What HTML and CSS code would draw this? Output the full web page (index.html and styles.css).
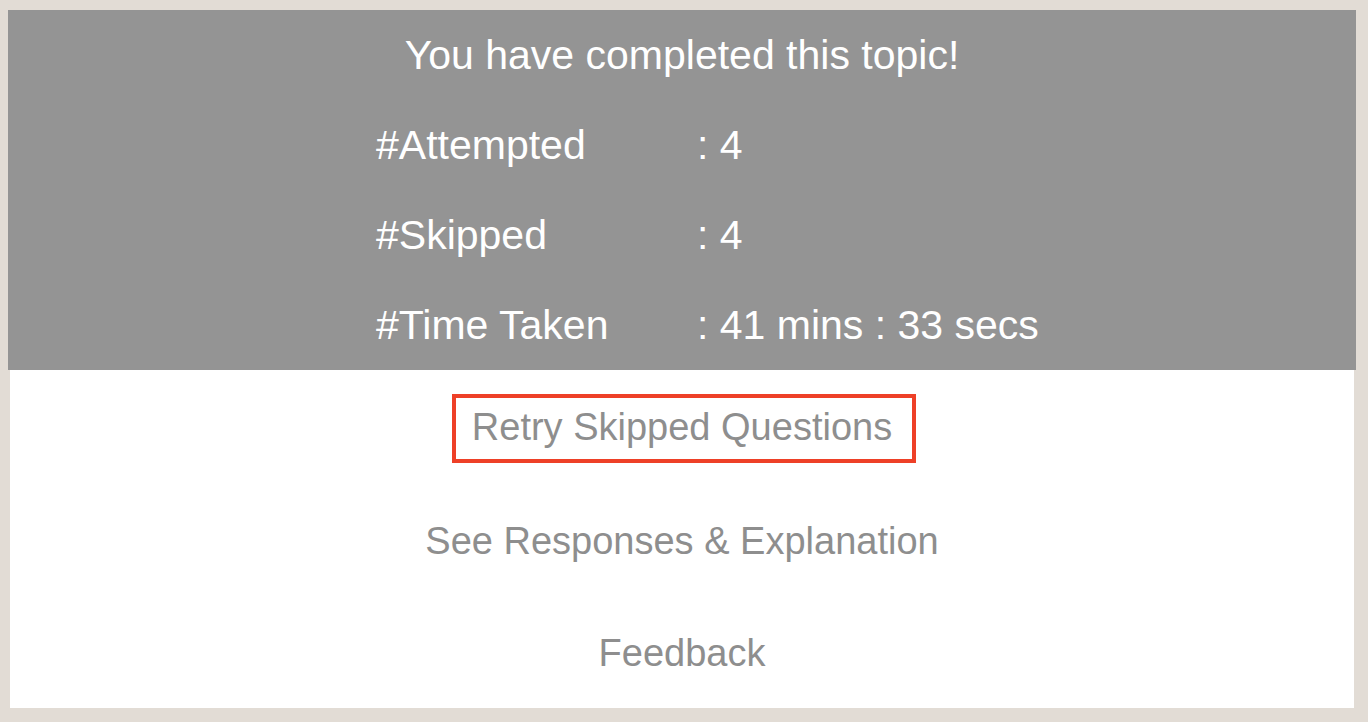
FILE: index.html
```html
<!DOCTYPE html>
<html lang="en">
<head>
<meta charset="utf-8">
<title>Topic completed</title>
<link rel="stylesheet" href="styles.css">
</head>
<body>
<div class="frame">
  <section class="summary">
    <h1 class="summary-title">You have completed this topic!</h1>
    <div class="stats">
      <div class="stat-label">#Attempted</div><div class="stat-value">: 4</div>
      <div class="stat-label">#Skipped</div><div class="stat-value">: 4</div>
      <div class="stat-label">#Time Taken</div><div class="stat-value">: 41 mins : 33 secs</div>
    </div>
  </section>
  <section class="actions">
    <a class="action action-retry" href="#">Retry Skipped Questions</a>
    <a class="action action-responses" href="#">See Responses &amp; Explanation</a>
    <a class="action action-feedback" href="#">Feedback</a>
  </section>
</div>
</body>
</html>
```
FILE: styles.css
```css
html, body {
  margin: 0;
  padding: 0;
}
body {
  background: #e2dcd5;
  font-family: "Liberation Sans", Arial, Helvetica, sans-serif;
  width: 1368px;
  height: 722px;
  overflow: hidden;
}
.frame {
  margin: 10px 12px 14px 8px;
  display: flex;
  flex-direction: column;
}
.summary {
  background: #949494;
  color: #ffffff;
  height: 360px;
  box-sizing: border-box;
  padding: 2px 0 0 0;
}
.summary-title {
  margin: 0;
  font-weight: normal;
  font-size: 41px;
  line-height: 86px;
  text-align: center;
}
.stats {
  display: grid;
  grid-template-columns: 321px auto;
  padding: 2px 0 0 368px;
  font-size: 41px;
  line-height: 90px;
}
.actions {
  background: #ffffff;
  margin: 0 2px;
  height: 338px;
  box-sizing: border-box;
  padding-top: 24px;
  display: flex;
  flex-direction: column;
  align-items: center;
}
.action {
  display: block;
  color: #8e8e8e;
  text-decoration: none;
  font-size: 38px;
  line-height: 42px;
  white-space: nowrap;
}
.action-retry {
  border: 4px solid #ee4027;
  padding: 8px 20px 11px 16px;
  margin-left: 4px;
}
.action-responses {
  margin-top: 57px;
}
.action-feedback {
  margin-top: 70px;
}
```
